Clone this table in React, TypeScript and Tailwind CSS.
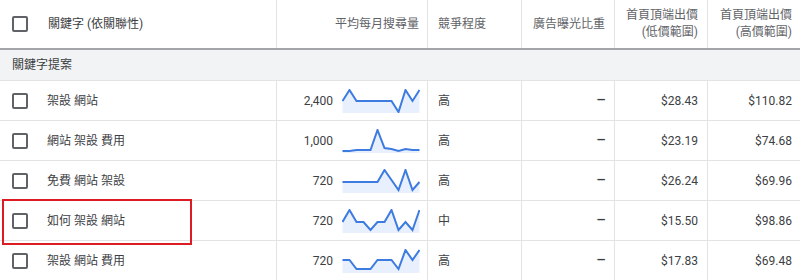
import React from 'react';

type Row = {
  keyword: string;
  volume: string;
  trend: number[];
  competition: string;
  low: string;
  high: string;
};

const rows: Row[] = [
  { keyword: '架設 網站', volume: '2,400', trend: [12, 1, 12, 12, 12, 12, 12, 12, 23, 1, 12, 1], competition: '高', low: '$28.43', high: '$110.82' },
  { keyword: '網站 架設 費用', volume: '1,000', trend: [22, 22, 21, 21, 21, 1, 19, 20, 22, 20, 21, 21], competition: '高', low: '$23.19', high: '$74.68' },
  { keyword: '免費 網站 架設', volume: '720', trend: [13, 13, 13, 13, 13, 13, 1, 11, 21, 1, 21, 13], competition: '高', low: '$26.24', high: '$69.96' },
  { keyword: '如何 架設 網站', volume: '720', trend: [13, 1, 13, 13, 21, 13, 13, 1, 21, 13, 21, 1], competition: '中', low: '$15.50', high: '$98.86' },
  { keyword: '架設 網站 費用', volume: '720', trend: [11, 11, 20, 20, 20, 11, 11, 11, 20, 1, 11, 1], competition: '高', low: '$17.83', high: '$69.48' },
];

const font = { fontFamily: 'Roboto, "Noto Sans CJK TC", sans-serif' };

const Checkbox = () => (
  <span className="block w-[16px] h-[16px] border-2 border-[#5f6368] rounded-[2px] shrink-0" />
);

const Sparkline = ({ data }: { data: number[] }) => {
  const step = 77 / (data.length - 1);
  const pts = data.map((v, i) => `${(i * step + 0.5).toFixed(1)},${v}`).join(' ');
  const area = `0.5,24 ${pts} 77.5,24`;
  return (
    <svg width="78" height="24" viewBox="0 0 78 24" className="block shrink-0 mt-[8px] self-start">
      <polygon points={area} fill="#e8f0fe" />
      <polyline points={pts} fill="none" stroke="#3d7be0" strokeWidth="2" strokeLinejoin="miter" />
    </svg>
  );
};

const cols = 'grid grid-cols-[276px_151px_94px_93px_93px_93px]';
const cell = 'border-l border-[#e3e3e3] flex items-center';

export default function App() {
  return (
    <div className="relative w-[800px] h-[280px] overflow-hidden bg-white text-[12px] text-[#3c4043]" style={font}>
      {/* header */}
      <div className={`${cols} h-[50px] border-b-2 border-[#a3a5a8] text-[#5f6368]`}>
        <div className="flex items-center pl-[12px]">
          <Checkbox />
          <span className="ml-[20px] text-[#3c4043]">關鍵字 (依關聯性)</span>
        </div>
        <div className={`${cell} justify-end pr-[8px]`}>平均每月搜尋量</div>
        <div className={`${cell} pl-[10px]`}>競爭程度</div>
        <div className={`${cell} justify-end pr-[9px]`}>廣告曝光比重</div>
        <div className={`${cell} justify-end pr-[9px] text-right leading-[17px]`}>
          <span>首頁頂端出價<br />(低價範圍)</span>
        </div>
        <div className={`${cell} justify-end pr-[8px] text-right leading-[17px]`}>
          <span>首頁頂端出價<br />(高價範圍)</span>
        </div>
      </div>

      {/* group */}
      <div className="h-[31px] bg-[#f1f3f4] border-b border-[#e3e3e3] flex items-center pl-[12px]">
        關鍵字提案
      </div>

      {rows.map((r) => (
        <div key={r.keyword} className={`${cols} h-[40px] border-b border-[#e3e3e3]`}>
          <div className="flex items-center pl-[12px]">
            <Checkbox />
            <span className="ml-[19px]">{r.keyword}</span>
          </div>
          <div className={`${cell} justify-end pr-[7px]`}>
            <span className="mr-[9px]">{r.volume}</span>
            <Sparkline data={r.trend} />
          </div>
          <div className={`${cell} pl-[10px]`}>{r.competition}</div>
          <div className={`${cell} justify-end pr-[8px]`}>
            <span className="text-[15px] font-medium">–</span>
          </div>
          <div className={`${cell} justify-end pr-[9px]`}>{r.low}</div>
          <div className={`${cell} justify-end pr-[8px]`}>{r.high}</div>
        </div>
      ))}

      {/* highlight */}
      <div className="absolute left-[2px] top-[199px] w-[190px] h-[46px] border-2 border-[#dc1c22]" />
    </div>
  );
}
